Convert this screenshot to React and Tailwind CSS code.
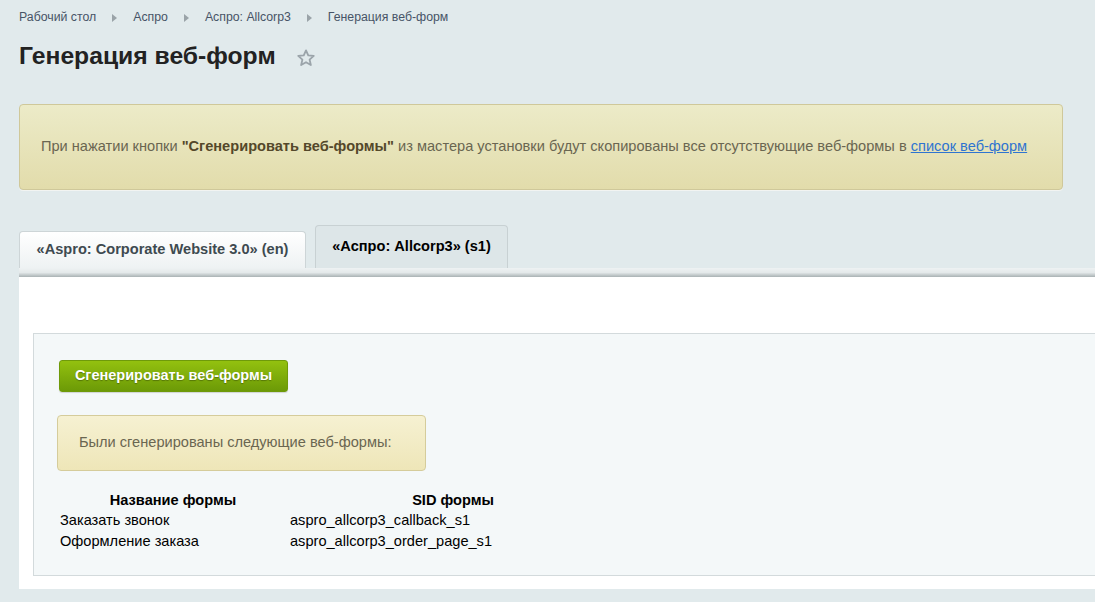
import React from "react";

const crumbs = ["Рабочий стол", "Аспро", "Аспро: Allcorp3", "Генерация веб-форм"];

const rows = [
  ["Заказать звонок", "aspro_allcorp3_callback_s1"],
  ["Оформление заказа", "aspro_allcorp3_order_page_s1"],
];

function Arrow() {
  return (
    <svg width="5" height="8" viewBox="0 0 5 8" className="mx-[16px]">
      <path d="M0 0 L5 4 L0 8 Z" fill="#9aa3a8" />
    </svg>
  );
}

function Star() {
  return (
    <svg width="20" height="20" viewBox="0 0 24 24" className="ml-[20px] mt-[4px]">
      <path
        d="M12 2.8 L14.7 8.9 L21.3 9.5 L16.3 13.9 L17.8 20.4 L12 17 L6.2 20.4 L7.7 13.9 L2.7 9.5 L9.3 8.9 Z"
        fill="none"
        stroke="#9ba4aa"
        strokeWidth="2.2"
        strokeLinejoin="round"
      />
    </svg>
  );
}

export default function App() {
  return (
    <div
      className="w-[1095px] h-[602px] overflow-hidden bg-[#e1eaec] text-black"
      style={{ fontFamily: '"Liberation Sans", Arial, sans-serif' }}
    >
      {/* breadcrumbs */}
      <div className="flex items-center pl-[19px] pt-[9px] h-[17px] box-content text-[12.3px] text-[#475467]">
        {crumbs.map((c, i) => (
          <React.Fragment key={c}>
            {i > 0 && <Arrow />}
            <span>{c}</span>
          </React.Fragment>
        ))}
      </div>

      {/* title */}
      <div className="flex items-center pl-[19px] mt-[14px] h-[32px]">
        <h1 className="text-[24.7px] font-bold text-[#222] leading-none">Генерация веб-форм</h1>
        <Star />
      </div>

      {/* notice */}
      <div className="ml-[19px] mt-[32px] w-[1044px] h-[86px] rounded-[4px] border border-[#cfc89a] bg-gradient-to-b from-[#ecebc8] to-[#e2dcab] flex items-center pl-[21px] text-[14.6px] text-[#6a6651] shadow-[0_1px_0_#f2f4f2]">
        <span>
          При нажатии кнопки <b className="text-[#54482a]">"Сгенерировать веб-формы"</b> из мастера установки будут
          скопированы все отсутствующие веб-формы в{" "}
          <a href="#" className="text-[#2f74d0] underline">список веб-форм</a>
        </span>
      </div>

      {/* tabs */}
      <div className="flex items-end pl-[19px] mt-[35px] h-[43px]">
        <div className="w-[287px] h-[37px] rounded-t-[4px] border border-b-0 border-[#cdd5d7] bg-gradient-to-b from-[#ffffff] to-[#eef2f3] flex items-center justify-center text-[14.6px] font-bold text-[#3e4a50]">
          «Aspro: Corporate Website 3.0» (en)
        </div>
        <div className="ml-[9px] w-[193px] h-[43px] rounded-t-[4px] border border-b-0 border-[#c8d1d3] bg-[#dde6e8] flex items-center justify-center text-[14.6px] font-bold text-black pb-[1px]">
          «Аспро: Allcorp3» (s1)
        </div>
      </div>
      <div className="ml-[19px] h-[9px] bg-gradient-to-b from-[#eef2f3] via-[#e4e9ea] to-[#a9b2b4]" />

      {/* content panel */}
      <div className="ml-[19px] bg-white pt-[56px] pb-[13px] pl-[14px] h-[312px]">
        <div className="h-[243px] bg-[#f4f8f9] border-t border-l border-b border-[#d3dadc] pl-[25px] pt-[26px]">
          <button className="w-[229px] h-[32px] rounded-[3px] bg-gradient-to-b from-[#93c10f] to-[#6c9a07] border border-[#6f9a0a] text-white text-[14.5px] font-bold [text-shadow:0_1px_1px_rgba(0,0,0,0.3)] shadow-[0_1px_1px_rgba(0,0,0,0.15)]">
            Сгенерировать веб-формы
          </button>

          <div className="mt-[23px] -ml-[2px] w-[369px] h-[56px] rounded-[4px] border border-[#d5cc9b] bg-gradient-to-b from-[#f6f1d2] to-[#eee6b8] flex items-center pl-[21px] text-[14.6px] text-[#6a6651]">
            Были сгенерированы следующие веб-формы:
          </div>

          <table className="mt-[19px] ml-[1px] text-[14.6px] leading-[21px] border-collapse">
            <thead>
              <tr className="leading-[20px]">
                <th className="w-[230px] text-center font-bold p-0 pr-[4px]">Название формы</th>
                <th className="w-[204px] text-right font-bold p-0">SID формы</th>
              </tr>
            </thead>
            <tbody>
              {rows.map(([name, sid]) => (
                <tr key={sid}>
                  <td className="p-0">{name}</td>
                  <td className="p-0">{sid}</td>
                </tr>
              ))}
            </tbody>
          </table>
        </div>
      </div>
    </div>
  );
}
